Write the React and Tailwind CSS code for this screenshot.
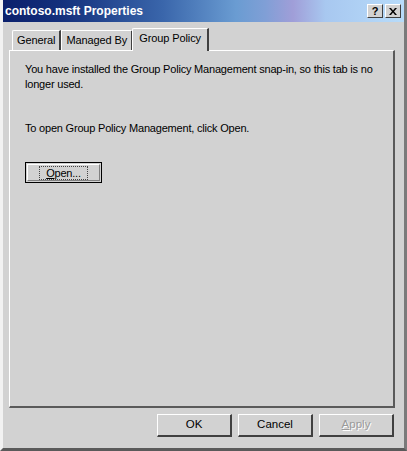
export default function App() {
  const font = { fontFamily: '"Liberation Sans", Arial, sans-serif' };
  return (
    <div className="w-[407px] h-[451px] bg-[#d2d2d2] relative overflow-hidden flex flex-col" style={font}>
      {/* window frame */}
      <div className="absolute inset-0 pointer-events-none border-l-[3px] border-l-[#f2f2f2] border-r-[3px] border-r-[#7a7a7a] border-b-[3px] border-b-[#5a5a5a] z-10" />
      {/* title bar */}
      <div className="h-[22px] flex items-center justify-between pl-[5px] pr-[6px] bg-[linear-gradient(90deg,#0a1f6b_0%,#14307c_15%,#3a66ab_40%,#6a9cd2_58%,#7f9fd6_65%,#a09ed8_72%,#a8c8f0_80%,#b8dcfa_100%)]">
        <span className="text-white font-bold text-[12px] leading-none">contoso.msft Properties</span>
        <div className="flex gap-[2px]">
          <div className="w-[16px] h-[14px] bg-[#d2d2d2] border border-t-white border-l-white border-r-[#404040] border-b-[#404040] flex items-center justify-center text-[11px] font-bold leading-none text-black">?</div>
          <div className="w-[16px] h-[14px] bg-[#d2d2d2] border border-t-white border-l-white border-r-[#404040] border-b-[#404040] flex items-center justify-center text-black">
            <svg width="8" height="7" viewBox="0 0 8 7"><path d="M0 0h2l2 2.5L6 0h2L5 3.5 8 7H6L4 4.5 2 7H0l3-3.5z" fill="#000"/></svg>
          </div>
        </div>
      </div>
      {/* tabs */}
      <div className="flex items-end pl-[12px] mt-[5px] h-[23px] relative z-[2] text-[11px] tracking-[-0.1px] text-black">
        <div className="h-[20px] px-[4px] flex items-center border-t border-l border-t-white border-l-white border-r-[2px] border-r-[#404040] rounded-tl-[2px]">General</div>
        <div className="h-[20px] px-[4px] flex items-center border-t border-l border-t-white border-l-white border-r-[2px] border-r-[#404040]">Managed By</div>
        <div className="h-[23px] px-[6px] pb-[3px] ml-[-1px] flex items-center border-t border-l border-t-white border-l-white border-r-[2px] border-r-[#404040] bg-[#d2d2d2] mb-[-1px] rounded-tl-[2px]">Group Policy</div>
      </div>
      {/* panel */}
      <div className="mx-[9px] mr-[12px] h-[358px] border-t border-l border-t-white border-l-white border-r-[2px] border-r-[#5a5a5a] border-b-[2px] border-b-[#5a5a5a] pl-[15px] pt-[11px] text-[11px] tracking-[-0.2px] text-black leading-[15px]">
        <p>You have installed the Group Policy Management snap-in, so this tab is no longer used.</p>
        <p className="mt-[29px]">To open Group Policy Management, click Open.</p>
        <button className="mt-[26px] w-[77px] h-[21px] border border-black bg-[#d2d2d2] p-[1px] flex">
          <span className="flex-1 border border-t-white border-l-white border-r-[#808080] border-b-[#808080] flex items-center justify-center">
            <span className="border border-dotted border-[#444] px-[6px] leading-[12px]"><u>O</u>pen...</span>
          </span>
        </button>
      </div>
      {/* bottom buttons */}
      <div className="flex justify-end gap-[6px] pr-[13px] mt-[6px] text-[11.5px] text-black">
        {['OK', 'Cancel'].map((t) => (
          <div key={t} className="w-[75px] h-[23px] border border-t-white border-l-white border-r-[#404040] border-b-[#404040] border-r-[2px] border-b-[2px] flex items-center justify-center">{t}</div>
        ))}
        <div className="w-[75px] h-[23px] border border-t-white border-l-white border-r-[#404040] border-b-[#404040] border-r-[2px] border-b-[2px] flex items-center justify-center text-[#9a9a9a] [text-shadow:1px_1px_0_#fff]"><span><u>A</u>pply</span></div>
      </div>
    </div>
  );
}
